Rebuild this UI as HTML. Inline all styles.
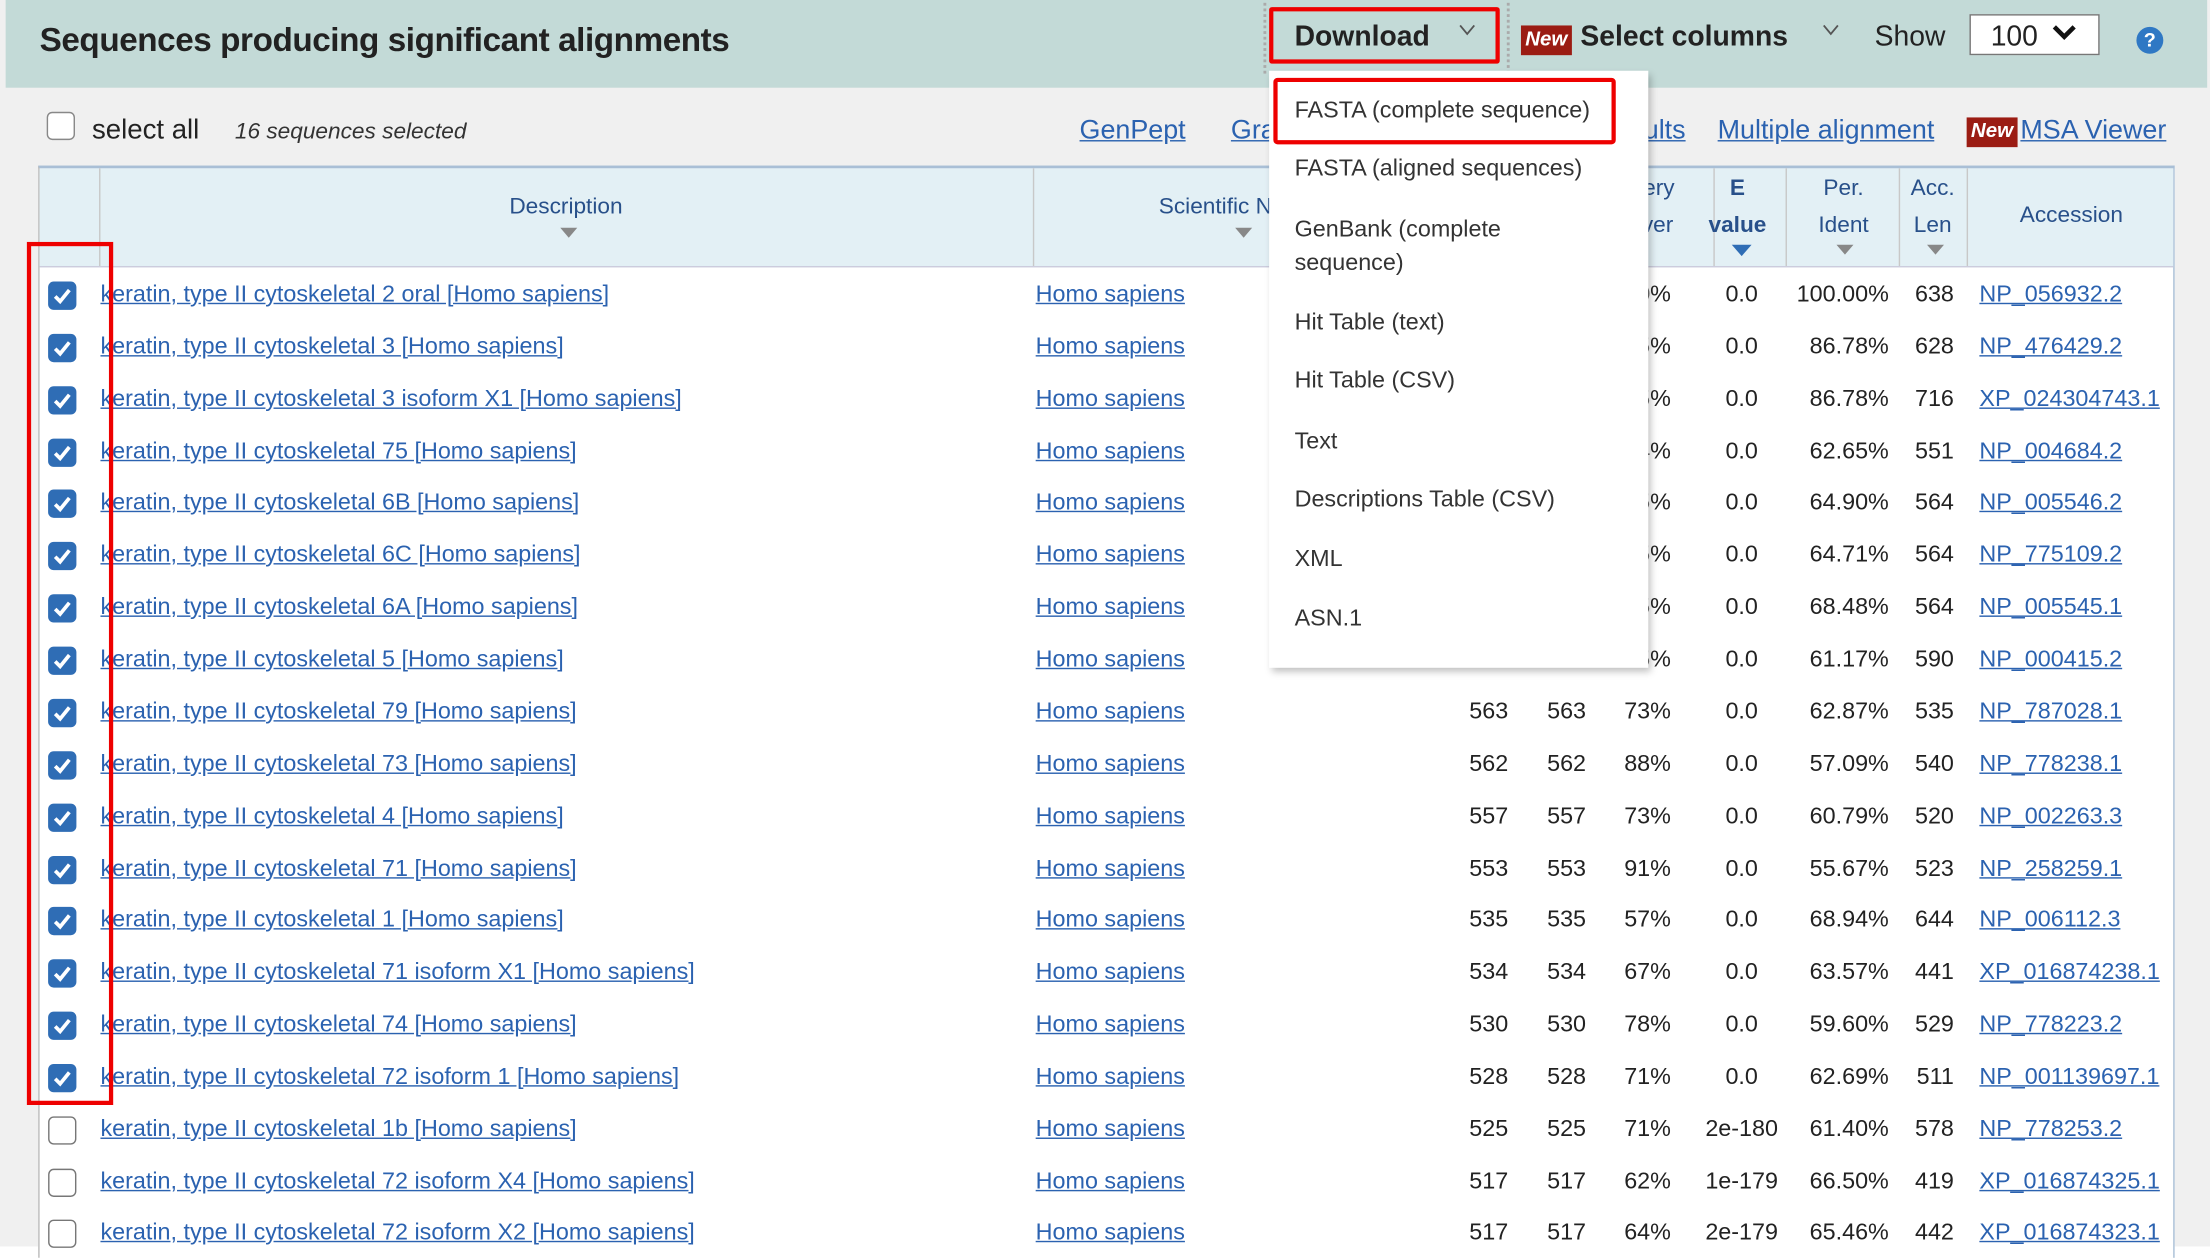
<!DOCTYPE html>
<html><head><meta charset="utf-8"><style>
html,body{margin:0;padding:0;width:2210px;height:1246px;overflow:hidden;background:#fff}
#w{position:absolute;left:0;top:0;width:1562px;height:881px;transform:scale(1.41485);transform-origin:0 0;font-family:"Liberation Sans",sans-serif;background:#f0f0f0}
.a{position:absolute;white-space:nowrap}
a,.lk{color:#2b62b0;text-decoration:underline}
.hdr{left:4px;top:0;width:1556px;height:62px;background:#c3dad7}
.title{left:28px;top:15px;font-size:23.5px;font-weight:bold;color:#222;letter-spacing:-0.3px}
.new{background:#9b1c13;color:#fff;font-style:italic;font-weight:bold;font-size:14.5px;padding:0 3px;height:21px;line-height:21px}
.tb{left:27px;top:117px;width:1508px;height:770px;background:#fff;border-left:1px solid #bbb;border-right:1px solid #a9bfd6;border-top:2px solid #a9bfd6}
.th{left:28px;top:119px;width:1508px;height:69px;background:#e3f0f5;border-bottom:1px solid #ccd}
.vs{position:absolute;top:119px;height:69px;width:1px;background:#c8c8c8}
.hl{color:#28508a;font-size:16px;text-align:center}
.tri{width:0;height:0;border-left:6px solid transparent;border-right:6px solid transparent;border-top:7px solid #888}
.row{position:absolute;left:0;width:1562px;height:37px;line-height:37px;font-size:16.5px;color:#222}
.row span,.row a{position:absolute;top:0;white-space:nowrap}
.cb{left:34px;top:9px!important;width:20px;height:20px;border-radius:4px;background:#2f6db5}
.cb svg{position:absolute;left:3px;top:3px}
.ub{left:34px;top:9px!important;width:18px;height:18px;border-radius:4px;border:1.5px solid #777;background:#fff}
.d{left:71px}.s{left:732px}
.m{left:1000px;width:66px;text-align:right}
.t{left:1055px;width:66px;text-align:right}
.q{left:1125px;width:56px;text-align:right}
.e{left:1196px;width:70px;text-align:center}
.p{left:1265px;width:70px;text-align:right}
.l{left:1340px;width:41px;text-align:right}
.ac{left:1399px}
.dd{left:897px;top:50px;width:268px;height:422px;background:#fff;box-shadow:2px 3px 5px rgba(0,0,0,0.25)}
.it{position:absolute;left:18px;font-size:16.5px;color:#333;line-height:24px}
</style></head><body><div id="w">
<div class="a hdr"></div>
<div class="a title">Sequences producing significant alignments</div>
<div class="a" style="left:893px;top:2px;height:50px;border-left:2px dotted #aaa"></div>
<div class="a" style="left:1065px;top:2px;height:50px;border-left:2px dotted #aaa"></div>
<div class="a" style="left:897px;top:5px;width:157px;height:34px;border:3px solid #e00;border-radius:2px"></div>
<div class="a" style="left:915px;top:15px;font-size:20px;font-weight:bold;color:#222">Download</div>
<svg class="a" style="left:1031px;top:17px" width="12" height="9" viewBox="0 0 12 9"><path d="M1 1 L6 7 L11 1" stroke="#555" stroke-width="1.3" fill="none"/></svg>
<div class="a new" style="left:1075px;top:18px">New</div>
<div class="a" style="left:1117px;top:15px;font-size:20px;font-weight:bold;color:#222">Select columns</div>
<svg class="a" style="left:1288px;top:17px" width="12" height="9" viewBox="0 0 12 9"><path d="M1 1 L6 7 L11 1" stroke="#555" stroke-width="1.3" fill="none"/></svg>
<div class="a" style="left:1325px;top:15px;font-size:20px;color:#222">Show</div>
<div class="a" style="left:1392px;top:10px;width:90px;height:27px;background:#fff;border:1px solid #777"></div>
<div class="a" style="left:1407px;top:15px;font-size:20px;color:#222">100</div>
<svg class="a" style="left:1450px;top:17px" width="18" height="12" viewBox="0 0 18 12"><path d="M2 2 L9 9 L16 2" stroke="#111" stroke-width="3.2" fill="none"/></svg>
<div class="a" style="left:1510px;top:19px;width:19px;height:19px;border-radius:50%;background:#2f78c4;color:#fff;font-weight:bold;font-size:14px;text-align:center;line-height:19px">?</div>

<div class="a" style="left:33px;top:79px;width:18px;height:18px;border:1.5px solid #888;border-radius:4px;background:#fff"></div>
<div class="a" style="left:65px;top:81px;font-size:19.5px;color:#222">select all</div>
<div class="a" style="left:166px;top:85px;font-size:16px;font-style:italic;color:#333">16 sequences selected</div>
<div class="a lk" style="left:763px;top:82px;font-size:19px">GenPept</div>
<div class="a lk" style="left:870px;top:82px;font-size:19px">Graphics</div>
<div class="a lk" style="left:1128px;top:82px;font-size:19px">Results</div>
<div class="a lk" style="left:1214px;top:82px;font-size:19px">Multiple alignment</div>
<div class="a new" style="left:1390px;top:83px">New</div>
<div class="a lk" style="left:1428px;top:82px;font-size:19px">MSA Viewer</div>

<div class="a tb"></div>
<div class="a th"></div>
<div class="vs" style="left:70px"></div><div class="vs" style="left:730px"></div>
<div class="vs" style="left:1211px"></div><div class="vs" style="left:1262px"></div><div class="vs" style="left:1342px"></div><div class="vs" style="left:1390px"></div>
<div class="a hl" style="left:340px;top:138px;width:120px">Description</div><div class="a tri" style="left:396px;top:161px"></div>
<div class="a hl" style="left:819px;top:138px">Scientific Name</div><div class="a tri" style="left:873px;top:161px"></div>
<div class="a hl" style="left:1140px;top:125px">Query</div><div class="a hl" style="left:1140px;top:151px">Cover</div>
<div class="a hl" style="left:1196px;top:125px;width:64px;font-weight:bold">E</div>
<div class="a hl" style="left:1196px;top:151px;width:64px;font-weight:bold">value</div>
<div class="a" style="left:1224px;top:173px;width:0;height:0;border-left:7px solid transparent;border-right:7px solid transparent;border-top:8px solid #2f6db5"></div>
<div class="a hl" style="left:1265px;top:125px;width:76px">Per.</div><div class="a hl" style="left:1265px;top:151px;width:76px">Ident</div><div class="a tri" style="left:1298px;top:173px"></div>
<div class="a hl" style="left:1343px;top:125px;width:46px">Acc.</div><div class="a hl" style="left:1343px;top:151px;width:46px">Len</div><div class="a tri" style="left:1362px;top:173px"></div>
<div class="a hl" style="left:1392px;top:144px;width:144px">Accession</div>

<div class="row" style="top:190px"><span class="cb"><svg width="14" height="14" viewBox="0 0 14 14"><path d="M2 7.5 L5.5 11 L12 3" stroke="#fff" stroke-width="2.6" fill="none"/></svg></span><a class="d">keratin, type II cytoskeletal 2 oral [Homo sapiens]</a><a class="s">Homo sapiens</a><span class="m">1140</span><span class="t">1140</span><span class="q">100%</span><span class="e">0.0</span><span class="p">100.00%</span><span class="l">638</span><a class="ac">NP_056932.2</a></div>
<div class="row" style="top:227px"><span class="cb"><svg width="14" height="14" viewBox="0 0 14 14"><path d="M2 7.5 L5.5 11 L12 3" stroke="#fff" stroke-width="2.6" fill="none"/></svg></span><a class="d">keratin, type II cytoskeletal 3 [Homo sapiens]</a><a class="s">Homo sapiens</a><span class="m">935</span><span class="t">935</span><span class="q">95%</span><span class="e">0.0</span><span class="p">86.78%</span><span class="l">628</span><a class="ac">NP_476429.2</a></div>
<div class="row" style="top:264px"><span class="cb"><svg width="14" height="14" viewBox="0 0 14 14"><path d="M2 7.5 L5.5 11 L12 3" stroke="#fff" stroke-width="2.6" fill="none"/></svg></span><a class="d">keratin, type II cytoskeletal 3 isoform X1 [Homo sapiens]</a><a class="s">Homo sapiens</a><span class="m">935</span><span class="t">935</span><span class="q">95%</span><span class="e">0.0</span><span class="p">86.78%</span><span class="l">716</span><a class="ac">XP_024304743.1</a></div>
<div class="row" style="top:301px"><span class="cb"><svg width="14" height="14" viewBox="0 0 14 14"><path d="M2 7.5 L5.5 11 L12 3" stroke="#fff" stroke-width="2.6" fill="none"/></svg></span><a class="d">keratin, type II cytoskeletal 75 [Homo sapiens]</a><a class="s">Homo sapiens</a><span class="m">610</span><span class="t">610</span><span class="q">84%</span><span class="e">0.0</span><span class="p">62.65%</span><span class="l">551</span><a class="ac">NP_004684.2</a></div>
<div class="row" style="top:337px"><span class="cb"><svg width="14" height="14" viewBox="0 0 14 14"><path d="M2 7.5 L5.5 11 L12 3" stroke="#fff" stroke-width="2.6" fill="none"/></svg></span><a class="d">keratin, type II cytoskeletal 6B [Homo sapiens]</a><a class="s">Homo sapiens</a><span class="m">600</span><span class="t">600</span><span class="q">85%</span><span class="e">0.0</span><span class="p">64.90%</span><span class="l">564</span><a class="ac">NP_005546.2</a></div>
<div class="row" style="top:374px"><span class="cb"><svg width="14" height="14" viewBox="0 0 14 14"><path d="M2 7.5 L5.5 11 L12 3" stroke="#fff" stroke-width="2.6" fill="none"/></svg></span><a class="d">keratin, type II cytoskeletal 6C [Homo sapiens]</a><a class="s">Homo sapiens</a><span class="m">598</span><span class="t">598</span><span class="q">85%</span><span class="e">0.0</span><span class="p">64.71%</span><span class="l">564</span><a class="ac">NP_775109.2</a></div>
<div class="row" style="top:411px"><span class="cb"><svg width="14" height="14" viewBox="0 0 14 14"><path d="M2 7.5 L5.5 11 L12 3" stroke="#fff" stroke-width="2.6" fill="none"/></svg></span><a class="d">keratin, type II cytoskeletal 6A [Homo sapiens]</a><a class="s">Homo sapiens</a><span class="m">596</span><span class="t">596</span><span class="q">85%</span><span class="e">0.0</span><span class="p">68.48%</span><span class="l">564</span><a class="ac">NP_005545.1</a></div>
<div class="row" style="top:448px"><span class="cb"><svg width="14" height="14" viewBox="0 0 14 14"><path d="M2 7.5 L5.5 11 L12 3" stroke="#fff" stroke-width="2.6" fill="none"/></svg></span><a class="d">keratin, type II cytoskeletal 5 [Homo sapiens]</a><a class="s">Homo sapiens</a><span class="m">590</span><span class="t">590</span><span class="q">85%</span><span class="e">0.0</span><span class="p">61.17%</span><span class="l">590</span><a class="ac">NP_000415.2</a></div>
<div class="row" style="top:485px"><span class="cb"><svg width="14" height="14" viewBox="0 0 14 14"><path d="M2 7.5 L5.5 11 L12 3" stroke="#fff" stroke-width="2.6" fill="none"/></svg></span><a class="d">keratin, type II cytoskeletal 79 [Homo sapiens]</a><a class="s">Homo sapiens</a><span class="m">563</span><span class="t">563</span><span class="q">73%</span><span class="e">0.0</span><span class="p">62.87%</span><span class="l">535</span><a class="ac">NP_787028.1</a></div>
<div class="row" style="top:522px"><span class="cb"><svg width="14" height="14" viewBox="0 0 14 14"><path d="M2 7.5 L5.5 11 L12 3" stroke="#fff" stroke-width="2.6" fill="none"/></svg></span><a class="d">keratin, type II cytoskeletal 73 [Homo sapiens]</a><a class="s">Homo sapiens</a><span class="m">562</span><span class="t">562</span><span class="q">88%</span><span class="e">0.0</span><span class="p">57.09%</span><span class="l">540</span><a class="ac">NP_778238.1</a></div>
<div class="row" style="top:559px"><span class="cb"><svg width="14" height="14" viewBox="0 0 14 14"><path d="M2 7.5 L5.5 11 L12 3" stroke="#fff" stroke-width="2.6" fill="none"/></svg></span><a class="d">keratin, type II cytoskeletal 4 [Homo sapiens]</a><a class="s">Homo sapiens</a><span class="m">557</span><span class="t">557</span><span class="q">73%</span><span class="e">0.0</span><span class="p">60.79%</span><span class="l">520</span><a class="ac">NP_002263.3</a></div>
<div class="row" style="top:596px"><span class="cb"><svg width="14" height="14" viewBox="0 0 14 14"><path d="M2 7.5 L5.5 11 L12 3" stroke="#fff" stroke-width="2.6" fill="none"/></svg></span><a class="d">keratin, type II cytoskeletal 71 [Homo sapiens]</a><a class="s">Homo sapiens</a><span class="m">553</span><span class="t">553</span><span class="q">91%</span><span class="e">0.0</span><span class="p">55.67%</span><span class="l">523</span><a class="ac">NP_258259.1</a></div>
<div class="row" style="top:632px"><span class="cb"><svg width="14" height="14" viewBox="0 0 14 14"><path d="M2 7.5 L5.5 11 L12 3" stroke="#fff" stroke-width="2.6" fill="none"/></svg></span><a class="d">keratin, type II cytoskeletal 1 [Homo sapiens]</a><a class="s">Homo sapiens</a><span class="m">535</span><span class="t">535</span><span class="q">57%</span><span class="e">0.0</span><span class="p">68.94%</span><span class="l">644</span><a class="ac">NP_006112.3</a></div>
<div class="row" style="top:669px"><span class="cb"><svg width="14" height="14" viewBox="0 0 14 14"><path d="M2 7.5 L5.5 11 L12 3" stroke="#fff" stroke-width="2.6" fill="none"/></svg></span><a class="d">keratin, type II cytoskeletal 71 isoform X1 [Homo sapiens]</a><a class="s">Homo sapiens</a><span class="m">534</span><span class="t">534</span><span class="q">67%</span><span class="e">0.0</span><span class="p">63.57%</span><span class="l">441</span><a class="ac">XP_016874238.1</a></div>
<div class="row" style="top:706px"><span class="cb"><svg width="14" height="14" viewBox="0 0 14 14"><path d="M2 7.5 L5.5 11 L12 3" stroke="#fff" stroke-width="2.6" fill="none"/></svg></span><a class="d">keratin, type II cytoskeletal 74 [Homo sapiens]</a><a class="s">Homo sapiens</a><span class="m">530</span><span class="t">530</span><span class="q">78%</span><span class="e">0.0</span><span class="p">59.60%</span><span class="l">529</span><a class="ac">NP_778223.2</a></div>
<div class="row" style="top:743px"><span class="cb"><svg width="14" height="14" viewBox="0 0 14 14"><path d="M2 7.5 L5.5 11 L12 3" stroke="#fff" stroke-width="2.6" fill="none"/></svg></span><a class="d">keratin, type II cytoskeletal 72 isoform 1 [Homo sapiens]</a><a class="s">Homo sapiens</a><span class="m">528</span><span class="t">528</span><span class="q">71%</span><span class="e">0.0</span><span class="p">62.69%</span><span class="l">511</span><a class="ac">NP_001139697.1</a></div>
<div class="row" style="top:780px"><span class="ub"></span><a class="d">keratin, type II cytoskeletal 1b [Homo sapiens]</a><a class="s">Homo sapiens</a><span class="m">525</span><span class="t">525</span><span class="q">71%</span><span class="e">2e-180</span><span class="p">61.40%</span><span class="l">578</span><a class="ac">NP_778253.2</a></div>
<div class="row" style="top:817px"><span class="ub"></span><a class="d">keratin, type II cytoskeletal 72 isoform X4 [Homo sapiens]</a><a class="s">Homo sapiens</a><span class="m">517</span><span class="t">517</span><span class="q">62%</span><span class="e">1e-179</span><span class="p">66.50%</span><span class="l">419</span><a class="ac">XP_016874325.1</a></div>
<div class="row" style="top:853px"><span class="ub"></span><a class="d">keratin, type II cytoskeletal 72 isoform X2 [Homo sapiens]</a><a class="s">Homo sapiens</a><span class="m">517</span><span class="t">517</span><span class="q">64%</span><span class="e">2e-179</span><span class="p">65.46%</span><span class="l">442</span><a class="ac">XP_016874323.1</a></div>

<div class="a" style="left:19px;top:171px;width:55px;height:604px;border:3px solid #e00"></div>

<div class="a dd">
<div class="a" style="left:3px;top:5px;width:236px;height:41px;border:3px solid #e00;border-radius:3px"></div>
<div class="it" style="top:16px">FASTA (complete sequence)</div>
<div class="it" style="top:57px">FASTA (aligned sequences)</div>
<div class="it" style="top:100px">GenBank (complete<br>sequence)</div>
<div class="it" style="top:166px">Hit Table (text)</div>
<div class="it" style="top:207px">Hit Table (CSV)</div>
<div class="it" style="top:250px">Text</div>
<div class="it" style="top:291px">Descriptions Table (CSV)</div>
<div class="it" style="top:333px">XML</div>
<div class="it" style="top:375px">ASN.1</div>
</div>
</div></body></html>
